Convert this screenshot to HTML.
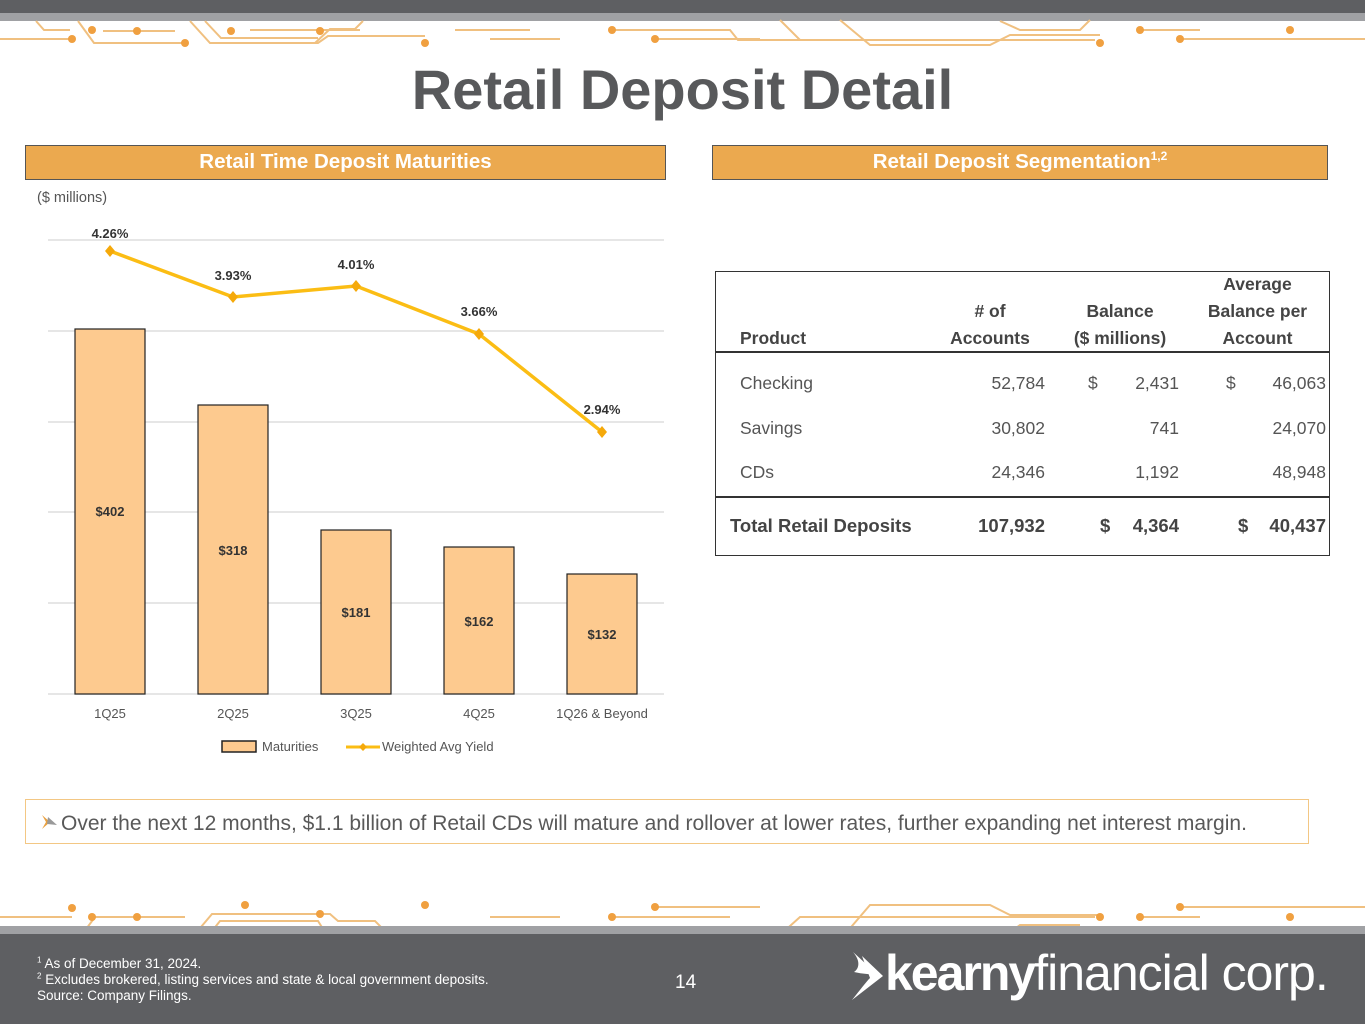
<!DOCTYPE html>
<html><head><meta charset="utf-8"><style>
*{margin:0;padding:0;box-sizing:border-box}
body{width:1365px;height:1024px;position:relative;background:#fff;font-family:"Liberation Sans",sans-serif;overflow:hidden;color:#555}
.a{position:absolute}
sup{line-height:0;vertical-align:super}
.hdr{background:#eba94f;border:1px solid #555;color:#fff;font-weight:bold;font-size:20.5px;text-align:center;line-height:32px}
.t{position:absolute;font-size:17.5px;color:#555;white-space:nowrap}
.b{font-weight:bold;color:#444}
.r{text-align:right}
</style></head><body>
<div class="a" style="left:0;top:0;width:1365px;height:13px;background:#5e5f62"></div>
<div class="a" style="left:0;top:13px;width:1365px;height:8px;background:#a0a1a4"></div>
<svg class="a" style="left:0;top:0" width="1365" height="1024">
<g fill="none" stroke="#f0c080" stroke-width="2">
<path d="M0 39H72M36 21L44 30H70M78 21L94 43H185M103 31H175M190 21L210 43H318L328 36H425M205 21L221 38H318M250 30H360M363 21L355 29H330L315 43M455 30H530M490 39H560"/>
<path d="M0 917H72M35 940L45 930H70M78 940L95 917H185M103 930H175M190 940L212 914H330L338 921H375L392 938H425L430 940M205 940L220 921H318L330 940M250 932H360M455 932H530M490 917H560"/>
<path d="M610 30H730L738 40H820M655 39H760M780 20L800 40H1095M840 20L870 45H990L1010 35H1100M1000 21L1020 30H1080L1090 20M1140 30H1200M1180 39H1365"/>
<path d="M610 917H730M655 907H760M780 935L800 917H1095M840 940L870 905H990L1010 915H1100M1000 940L1020 925H1080M1140 917H1200M1180 907H1365"/>
</g>
<g fill="#f0a040">
<circle cx="72" cy="39" r="4"/><circle cx="92" cy="30" r="4"/><circle cx="137" cy="31" r="4"/><circle cx="185" cy="43" r="4"/><circle cx="231" cy="31" r="4"/><circle cx="320" cy="31" r="4"/><circle cx="425" cy="43" r="4"/><circle cx="612" cy="30" r="4"/><circle cx="655" cy="39" r="4"/><circle cx="1100" cy="43" r="4"/><circle cx="1140" cy="30" r="4"/><circle cx="1180" cy="39" r="4"/><circle cx="1290" cy="30" r="4"/>
<circle cx="72" cy="908" r="4"/><circle cx="92" cy="917" r="4"/><circle cx="137" cy="917" r="4"/><circle cx="245" cy="905" r="4"/><circle cx="320" cy="914" r="4"/><circle cx="425" cy="905" r="4"/><circle cx="612" cy="917" r="4"/><circle cx="655" cy="907" r="4"/><circle cx="1100" cy="917" r="4"/><circle cx="1140" cy="917" r="4"/><circle cx="1180" cy="907" r="4"/><circle cx="1290" cy="917" r="4"/>
</g>
</svg>
<div class="a" style="left:0;top:62px;width:1365px;text-align:center;font-size:56px;font-weight:bold;color:#58595b;line-height:1">Retail Deposit Detail</div>

<div class="a hdr" style="left:25px;top:145px;width:641px;height:35px">Retail Time Deposit Maturities</div>
<div class="a hdr" style="left:712px;top:145px;width:616px;height:35px">Retail Deposit Segmentation<sup style="font-size:12px">1,2</sup></div>
<div class="t" style="left:37px;top:190px;font-size:14.5px">($ millions)</div>

<svg class="a" style="left:0;top:0" width="700" height="770" font-family="Liberation Sans">
<g stroke="#ddd" stroke-width="1.5"><path d="M48 240H664M48 331H664M48 422H664M48 512H664M48 603H664M48 694H664"/></g>
<g fill="#fdca8f" stroke="#222" stroke-width="1.2">
<rect x="75" y="329" width="70" height="365"/><rect x="198" y="405" width="70" height="289"/><rect x="321" y="530" width="70" height="164"/><rect x="444" y="547" width="70" height="147"/><rect x="567" y="574" width="70" height="120"/>
</g>
<polyline points="110,251 233,297 356,286 479,334 602,432" fill="none" stroke="#fbbd14" stroke-width="3.5"/>
<g fill="#f5a90a">
<path d="M110 245l5 6-5 6-5-6z"/><path d="M233 291l5 6-5 6-5-6z"/><path d="M356 280l5 6-5 6-5-6z"/><path d="M479 328l5 6-5 6-5-6z"/><path d="M602 426l5 6-5 6-5-6z"/>
</g>
<g font-size="13" font-weight="bold" fill="#333" text-anchor="middle">
<text x="110" y="238">4.26%</text><text x="233" y="280">3.93%</text><text x="356" y="269">4.01%</text><text x="479" y="316">3.66%</text><text x="602" y="414">2.94%</text>
<text x="110" y="516">$402</text><text x="233" y="555">$318</text><text x="356" y="617">$181</text><text x="479" y="626">$162</text><text x="602" y="639">$132</text>
</g>
<g font-size="13" fill="#555" text-anchor="middle">
<text x="110" y="718">1Q25</text><text x="233" y="718">2Q25</text><text x="356" y="718">3Q25</text><text x="479" y="718">4Q25</text><text x="602" y="718">1Q26 &amp; Beyond</text>
</g>
<rect x="222" y="741" width="34" height="11" fill="#fdca8f" stroke="#222" stroke-width="1.5"/>
<text x="262" y="751" font-size="13" fill="#555">Maturities</text>
<path d="M346 747H380" stroke="#fbbd14" stroke-width="3"/><path d="M363 743l4 4-4 4-4-4z" fill="#f5a90a"/>
<text x="382" y="751" font-size="13" fill="#555">Weighted Avg Yield</text>
</svg>

<div class="a" style="left:715px;top:271px;width:615px;height:285px;border:1.5px solid #333"></div>
<div class="a" style="left:715px;top:351px;width:615px;height:2px;background:#333"></div>
<div class="a" style="left:715px;top:496px;width:615px;height:2px;background:#333"></div>
<div class="t b" style="left:740px;top:328px">Product</div>
<div class="t b" style="left:940px;top:301px;width:100px;text-align:center">#&nbsp;of</div>
<div class="t b" style="left:940px;top:328px;width:100px;text-align:center">Accounts</div>
<div class="t b" style="left:1060px;top:301px;width:120px;text-align:center">Balance</div>
<div class="t b" style="left:1060px;top:328px;width:120px;text-align:center">($ millions)</div>
<div class="t b" style="left:1195px;top:274px;width:125px;text-align:center">Average</div>
<div class="t b" style="left:1195px;top:301px;width:125px;text-align:center">Balance per</div>
<div class="t b" style="left:1195px;top:328px;width:125px;text-align:center">Account</div>

<div class="t" style="left:740px;top:373px">Checking</div><div class="t r" style="left:940px;top:373px;width:105px">52,784</div><div class="t" style="left:1088px;top:373px">$</div><div class="t r" style="left:1100px;top:373px;width:79px">2,431</div><div class="t" style="left:1226px;top:373px">$</div><div class="t r" style="left:1240px;top:373px;width:86px">46,063</div>
<div class="t" style="left:740px;top:418px">Savings</div><div class="t r" style="left:940px;top:418px;width:105px">30,802</div><div class="t r" style="left:1100px;top:418px;width:79px">741</div><div class="t r" style="left:1240px;top:418px;width:86px">24,070</div>
<div class="t" style="left:740px;top:462px">CDs</div><div class="t r" style="left:940px;top:462px;width:105px">24,346</div><div class="t r" style="left:1100px;top:462px;width:79px">1,192</div><div class="t r" style="left:1240px;top:462px;width:86px">48,948</div>
<div class="t b" style="left:730px;top:515px;font-size:18.5px">Total Retail Deposits</div><div class="t b r" style="left:940px;top:515px;width:105px;font-size:18.5px">107,932</div><div class="t b" style="left:1100px;top:515px;font-size:18.5px">$</div><div class="t b r" style="left:1100px;top:515px;width:79px;font-size:18.5px">4,364</div><div class="t b" style="left:1238px;top:515px;font-size:18.5px">$</div><div class="t b r" style="left:1240px;top:515px;width:86px;font-size:18.5px">40,437</div>

<div class="a" style="left:25px;top:799px;width:1284px;height:45px;border:1.5px solid #f3c784"></div>
<svg class="a" style="left:40px;top:814px" width="20" height="16"><path d="M2 1L10 8L2 15L6 8Z" fill="#e8a040"/><path d="M8 3L17 11L7 10Z" fill="#999"/></svg>
<div class="t" style="left:61px;top:812px;font-size:21px;color:#595959">Over the next 12 months, $1.1 billion of Retail CDs will mature and rollover at lower rates, further expanding net interest margin.</div>

<div class="a" style="left:0;top:926px;width:1365px;height:8px;background:#a0a1a4"></div>
<div class="a" style="left:0;top:934px;width:1365px;height:90px;background:#5e5f62"></div>
<div class="a" style="left:37px;top:956px;font-size:13.5px;color:#fff;line-height:16px;white-space:nowrap"><sup style="font-size:8px">1</sup> As of December 31, 2024.<br><sup style="font-size:8px">2</sup> Excludes brokered, listing services and state &amp; local government deposits.<br>Source: Company Filings.</div>
<div class="a" style="left:675px;top:972px;font-size:19px;color:#fff">14</div>
<svg class="a" style="left:850px;top:950px" width="36" height="52"><path d="M3 2C14 12 22 20 31 26C22 24 12 24 4 22C10 18 10 10 3 2Z" fill="#fff"/><path d="M12 6L33 26L2 50C10 40 16 32 20 28Z" fill="#fff"/></svg>
<div class="a" style="left:885px;top:944px;font-size:50px;color:#fff;letter-spacing:-1px;white-space:nowrap"><b style="letter-spacing:-2px">kearny</b><span style="font-weight:normal">financial corp.</span></div>
</body></html>
